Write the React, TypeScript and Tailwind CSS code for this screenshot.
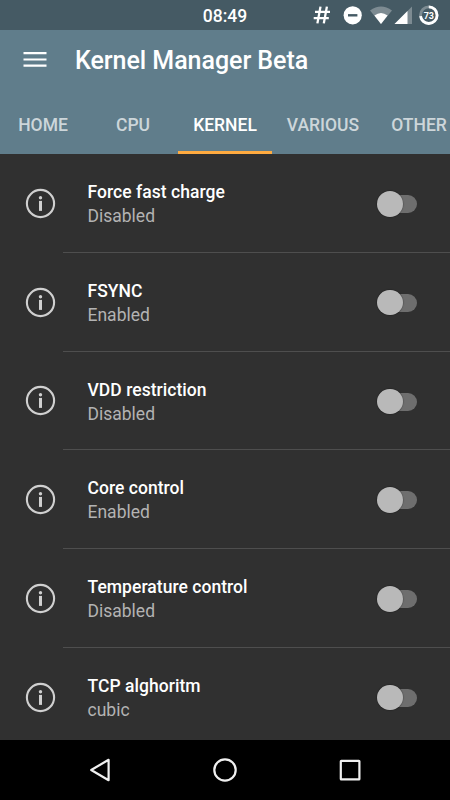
import { useState } from 'react';

const tabs = [
    { label: 'HOME', width: 'w-[90px]' },
    { label: 'CPU', width: 'w-[90px]' },
    { label: 'KERNEL', width: 'w-[94px]' },
    { label: 'VARIOUS', width: 'w-[102px]' },
    { label: 'OTHER', width: 'w-[90px]' },
];

const settings = [
    { title: 'Force fast charge', value: 'Disabled' },
    { title: 'FSYNC', value: 'Enabled' },
    { title: 'VDD restriction', value: 'Disabled' },
    { title: 'Core control', value: 'Enabled' },
    { title: 'Temperature control', value: 'Disabled' },
    { title: 'TCP alghoritm', value: 'cubic' },
];

function StatusBar() {
    return (
        <div className="relative h-[30px] shrink-0 bg-[#455a64] flex items-center justify-center">
            <span className="text-[17.5px] leading-[30px] font-medium text-white pt-px">08:49</span>

            {/* Notification and system icons */}
            <svg className="absolute right-0 top-0" width="150" height="30" viewBox="0 0 150 30">
                <path
                    d="M20.5 6.6L17.4 23.4M26.9 6.6L23.8 23.4M15 11.9H30M13.7 18.2H28.8"
                    fill="none"
                    stroke="#fff"
                    strokeWidth="2.3"
                />
                <circle cx="52.7" cy="15.3" r="9.1" fill="#fff" />
                <rect x="48" y="14.1" width="9.4" height="2.4" fill="#455a64" />
                <path d="M70 10.5Q81 2.5 92 10.5L81 24Z" fill="#fff" fillOpacity="0.3" />
                <path d="M74.4 15.6Q81 10.4 87.6 15.6L81 24Z" fill="#fff" />
                <path d="M94.5 24L112 6.5V24Z" fill="#fff" fillOpacity="0.3" />
                <path d="M94.5 24L107.5 11V24Z" fill="#fff" />
                <circle cx="128.8" cy="15.2" r="8.3" fill="none" stroke="#fff" strokeOpacity="0.3" strokeWidth="2.8" />
                <circle
                    cx="128.8"
                    cy="15.2"
                    r="8.3"
                    fill="none"
                    stroke="#fff"
                    strokeWidth="2.8"
                    pathLength="100"
                    strokeDasharray="73 27"
                    transform="rotate(-90 128.8 15.2)"
                />
                <text x="128.8" y="18.6" textAnchor="middle" fontSize="9" fontWeight="700" fill="#fff">
                    73
                </text>
            </svg>
        </div>
    );
}

function InfoIcon() {
    return (
        <svg width="31" height="31" viewBox="0 0 31 31">
            <circle cx="15.5" cy="15.5" r="13.6" fill="none" stroke="#d0d0d0" strokeWidth="2.1" />
            <circle cx="15.5" cy="9.8" r="1.7" fill="#d0d0d0" />
            <rect x="14" y="12.9" width="3" height="10" fill="#d0d0d0" />
        </svg>
    );
}

function Toggle({ checked, onChange }: { checked: boolean; onChange: () => void }) {
    return (
        <button onClick={onChange} className="relative w-[40px] h-[26px] flex items-center justify-center">
            <span className="w-[34px] h-[18px] ml-[6px] rounded-full bg-[#6e6e6e]" />
            <span
                className={`absolute top-0 size-[25.5px] rounded-full bg-[#b9b9b9] shadow-[0_0_1px_0.5px_rgba(0,0,0,0.3)] ${
                    checked ? 'right-0' : 'left-0'
                }`}
            />
        </button>
    );
}

export default function App() {
    const [activeTab, setActiveTab] = useState('KERNEL');
    const [enabled, setEnabled] = useState<string[]>([]);

    const toggle = (title: string) => {
        setEnabled(enabled.includes(title) ? enabled.filter((t) => t !== title) : [...enabled, title]);
    };

    return (
        <div className="w-[450px] h-[800px] overflow-hidden flex flex-col bg-[#303030] font-[Roboto,sans-serif]">
            <StatusBar />

            <header className="h-[124px] shrink-0 bg-[#607d8b] flex flex-col overflow-hidden">
                <div className="h-[60px] flex items-center">
                    <button className="ml-[23px] w-[24px]">
                        <svg width="24" height="16" viewBox="0 0 24 16">
                            <path d="M0.5 1.1H23.5M0.5 7.5H23.5M0.5 13.6H23.5" stroke="#fff" strokeWidth="2.2" />
                        </svg>
                    </button>
                    <h1 className="ml-[28px] pt-[2px] text-[25px] tracking-[-0.04px] font-medium text-white">
                        Kernel Manager Beta
                    </h1>
                </div>

                {/* Scrollable tabs */}
                <nav className="h-[64px] -ml-[2px] flex">
                    {tabs.map((tab) => (
                        <button
                            key={tab.label}
                            onClick={() => setActiveTab(tab.label)}
                            className={`${tab.width} shrink-0 pt-[9px] border-b-3 text-[17.5px] font-medium ${
                                activeTab === tab.label
                                    ? 'text-white border-[#ffab40]'
                                    : 'text-white/70 border-transparent'
                            }`}
                        >
                            {tab.label}
                        </button>
                    ))}
                </nav>
            </header>

            <main className="h-[586px] overflow-hidden">
                {settings.map((item) => (
                    <div key={item.title} className="h-[98.75px] flex">
                        <div className="w-[63px] shrink-0 pl-[25px] flex items-center">
                            <InfoIcon />
                        </div>
                        <div className="flex-1 pl-[24.5px] pr-[33px] pt-[2.5px] flex items-center justify-between border-b border-[#4e4e4e]">
                            <div>
                                <p className="text-[17.5px] leading-[24px] tracking-[0.04px] font-medium text-white">
                                    {item.title}
                                </p>
                                <p className="text-[17.5px] leading-[24px] text-[#b3b3b3]">{item.value}</p>
                            </div>
                            <Toggle checked={enabled.includes(item.title)} onChange={() => toggle(item.title)} />
                        </div>
                    </div>
                ))}
            </main>

            {/* Navigation bar */}
            <footer className="h-[60px] shrink-0 bg-black">
                <svg width="450" height="60" viewBox="0 0 450 60" fill="none" stroke="#f0f0f0" strokeWidth="2.2">
                    <path d="M108.6 19.8V40.2L91.2 30Z" strokeLinejoin="round" />
                    <circle cx="225" cy="30" r="10.7" />
                    <rect x="340.8" y="20.8" width="18.6" height="18.6" rx="0.5" />
                </svg>
            </footer>
        </div>
    );
}
